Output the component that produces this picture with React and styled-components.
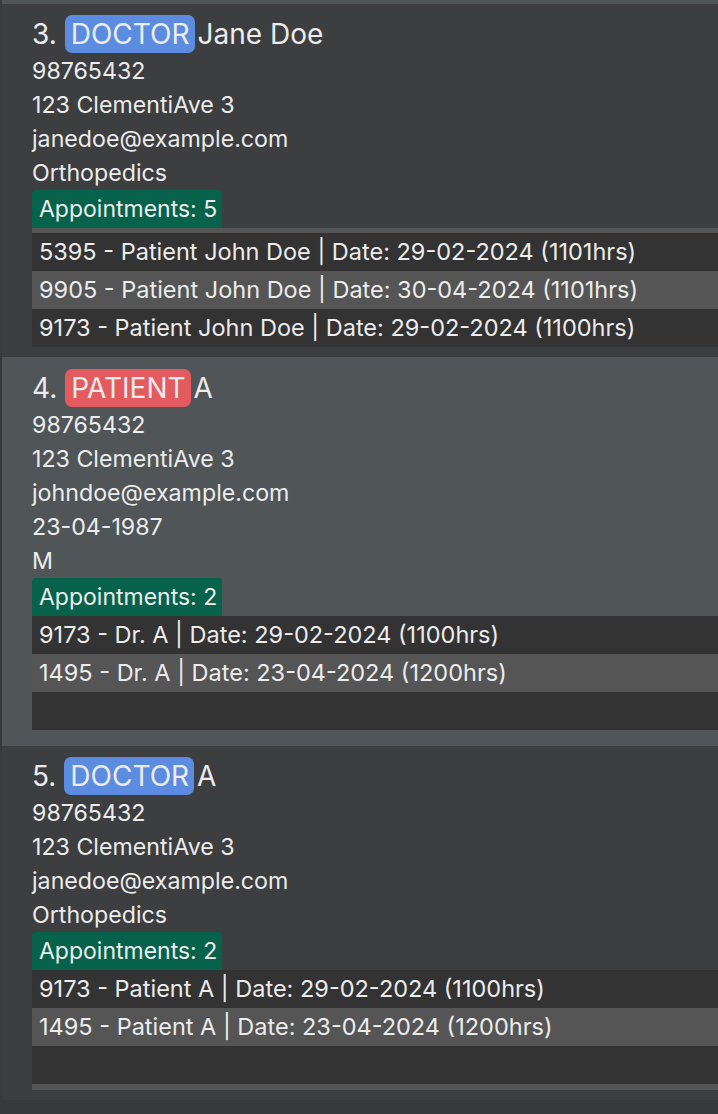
import styled, { createGlobalStyle } from 'styled-components';

const GlobalStyle = createGlobalStyle`
	html, body {
		margin: 0;
		padding: 0;
		background: #343536;
		overflow: hidden;
	}
	* { box-sizing: border-box; }
`

const ListView = styled.div`
	width: 718px;
	height: 1114px;
	padding-left: 2px;
	background: #38393b;
	font-family: Inter, "Open Sans", sans-serif;
	color: #ececec;
	overflow: hidden;
`

const PrevTail = styled.div`
	height: 4px;
	background: #505558;
`

const Card = styled.div`
	display: flex;
	flex-direction: column;
	padding: ${({ top }) => top}px 0 ${({ bottom }) => bottom}px 30px;
	background: ${({ selected }) => (selected ? '#505558' : '#3c3e40')};
`

const Heading = styled.div`
	display: flex;
	align-items: center;
	height: 38px;
	font-size: 28px;
	white-space: nowrap;
	margin-bottom: 1px;
`

const Index = styled.span`
	margin-right: 8px;
`

const RoleTag = styled.span`
	display: inline-flex;
	align-items: center;
	height: 38px;
	padding: 0 5px 0 6px;
	margin-right: 3px;
	border-radius: 7px;
	background: ${({ role }) => (role === 'PATIENT' ? '#e35b5e' : '#5b8ce0')};
`

const Field = styled.div`
	height: 34px;
	line-height: 34px;
	font-size: 23.2px;
	white-space: nowrap;
`

const CountTag = styled.div`
	align-self: flex-start;
	height: 38px;
	line-height: 38px;
	padding: 0 5px 0 7px;
	border-radius: 4px 4px 0 0;
	background: #07624b;
	font-size: 23px;
	white-space: nowrap;
`

const AppointmentList = styled.div`
	height: ${({ h }) => h}px;
	overflow: hidden;
	background: #333333;
`

const AppointmentRows = styled.div`
	margin-top: ${({ scroll }) => -scroll}px;
`

const Row = styled.div`
	height: 38px;
	line-height: 38px;
	padding-left: 7px;
	background: ${({ odd }) => (odd ? '#555555' : '#333333')};
	font-size: 23.5px;
	white-space: nowrap;
`

const cards = [
	{
		no: 3,
		role: 'DOCTOR',
		name: 'Jane Doe',
		fields: ['98765432', '123 ClementiAve 3', 'janedoe@example.com', 'Orthopedics'],
		appointments: [
			'4821 - Patient John Doe | Date: 28-02-2024 (1000hrs)',
			'7310 - Patient John Doe | Date: 28-02-2024 (1030hrs)',
			'5395 - Patient John Doe | Date: 29-02-2024 (1101hrs)',
			'9905 - Patient John Doe | Date: 30-04-2024 (1101hrs)',
			'9173 - Patient John Doe | Date: 29-02-2024 (1100hrs)',
		],
		listHeight: 119,
		scroll: 71,
		rows: 5,
		top: 11,
		bottom: 10,
	},
	{
		no: 4,
		role: 'PATIENT',
		name: 'A',
		fields: ['98765432', '123 ClementiAve 3', 'johndoe@example.com', '23-04-1987', 'M'],
		appointments: [
			'9173 - Dr. A | Date: 29-02-2024 (1100hrs)',
			'1495 - Dr. A | Date: 23-04-2024 (1200hrs)',
		],
		listHeight: 114,
		scroll: 0,
		rows: 3,
		top: 12,
		bottom: 16,
		selected: true,
	},
	{
		no: 5,
		role: 'DOCTOR',
		name: 'A',
		fields: ['98765432', '123 ClementiAve 3', 'janedoe@example.com', 'Orthopedics'],
		appointments: [
			'9173 - Patient A | Date: 29-02-2024 (1100hrs)',
			'1495 - Patient A | Date: 23-04-2024 (1200hrs)',
		],
		listHeight: 120,
		scroll: 0,
		rows: 4,
		top: 11,
		bottom: 10,
	},
]

const PersonCard = ({ card }) => {
	const rows = Array.from({ length: card.rows }, (_, i) => card.appointments[i] || '')
	return (
		<Card selected={card.selected} top={card.top} bottom={card.bottom}>
			<Heading>
				<Index>{card.no}.</Index>
				<RoleTag role={card.role}>{card.role}</RoleTag>
				<span>{card.name}</span>
			</Heading>
			{card.fields.map((f, i) => <Field key={i}>{f}</Field>)}
			<CountTag>Appointments: {card.appointments.length}</CountTag>
			<AppointmentList h={card.listHeight}>
				<AppointmentRows scroll={card.scroll}>
					{rows.map((text, i) => <Row key={i} odd={i % 2 === 1}>{text}</Row>)}
				</AppointmentRows>
			</AppointmentList>
		</Card>
	)
}

export default function App() {
	return (
		<>
			<GlobalStyle />
			<ListView>
				<PrevTail />
				{cards.map(card => <PersonCard key={card.no} card={card} />)}
			</ListView>
		</>
	)
}
